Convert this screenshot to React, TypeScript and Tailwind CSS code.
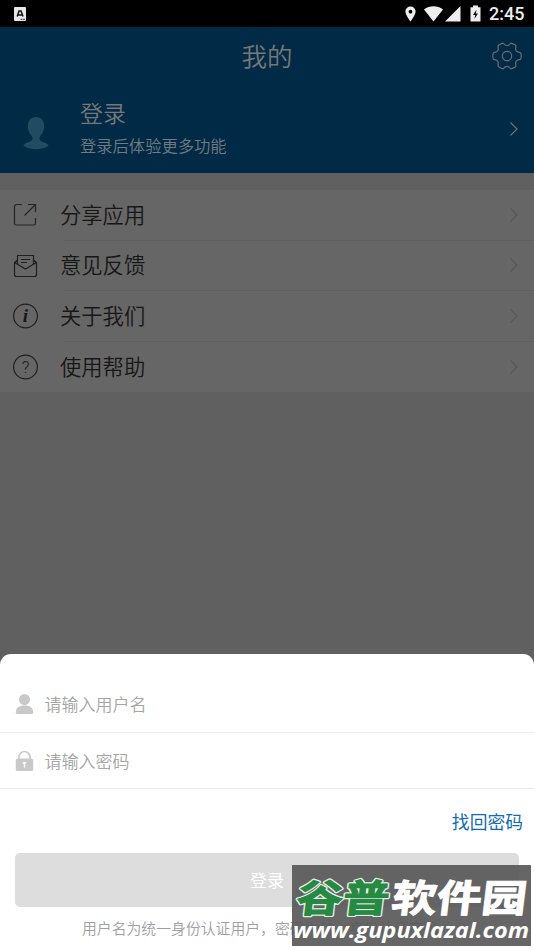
import type { ReactNode } from "react";

function Chevron({ color }: { color: string }) {
  return (
    <svg width="10" height="16" viewBox="0 0 10 16" fill="none" stroke={color} strokeWidth="1.2" className="shrink-0">
      <path d="M1.5 1.5 8 8l-6.500 6.500" />
    </svg>
  );
}

function StatusBar() {
  return (
    <div className="flex h-[27px] items-center bg-black pl-[14px] pr-[9px]">
      <svg width="12" height="14" viewBox="0 0 12 14">
        <rect width="12" height="14" rx="1" fill="#e8e8e8" />
        <path d="M3.200 9.500 5 4h2l2 5.500M4 8h4" fill="none" stroke="#111" strokeWidth="1.500" />
        <path d="M6.500 12.300h4.500" stroke="#333" strokeWidth="1" strokeDasharray="2 .5" />
      </svg>
      <div className="ml-auto flex items-center">
        <svg width="11" height="16" viewBox="0 0 11 16" fill="#eee">
          <path fillRule="evenodd" d="M5.500.5A5 5 0 0 0 .4 5.600C.4 9.300 5.500 15.500 5.500 15.500s5.100-6.200 5.100-9.900A5 5 0 0 0 5.500.5Zm0 3.300a1.900 1.900 0 1 1 0 3.800 1.900 1.900 0 0 1 0-3.800Z" />
        </svg>
        <svg width="19" height="16" viewBox="0 0 19 16" fill="#eee" className="ml-[8px]">
          <path d="M0 3.500C5.500-.7 13.500-.7 19 3.500L9.500 15.500Z" />
        </svg>
        <svg width="16" height="16" viewBox="0 0 16 16" fill="#eee" className="ml-[2px]">
          <path d="M0 15.500 15.500 0v15.500Z" />
        </svg>
        <svg width="11" height="17" viewBox="0 0 11 17" className="ml-[9px]">
          <path d="M3 .5h5v1.700h2.500v14.300H.5V2.200H3Z" fill="#eee" />
          <path d="M6.500 4.500 3 10h2.200l-.8 4L8 8.500H5.800Z" fill="#111" />
        </svg>
        <span className="ml-[8px] w-[36px] whitespace-nowrap font-['Roboto',sans-serif] text-[18px] font-medium leading-[27px] text-[#ececec]">2:45</span>
      </div>
    </div>
  );
}

function Row({ icon, label, divider = true }: { icon: ReactNode; label: string; divider?: boolean }) {
  return (
    <div className="flex h-[50.500px] pl-[12px]">
      <div className="flex w-[49px] shrink-0 items-center">{icon}</div>
      <div className={"ml-[3px] flex flex-1 items-center justify-between pr-[15px] " + (divider ? "border-b border-[#5f5f5f]" : "")}>
        <span className="-ml-[4px] -mt-[2px] text-[21.300px] text-[#171717]">{label}</span>
        <Chevron color="#595959" />
      </div>
    </div>
  );
}

const shareIcon = (
  <svg width="26" height="26" viewBox="0 0 26 26" fill="none" stroke="#252525" strokeWidth="1.200">
    <path d="M10 2.500H4.500a2 2 0 0 0-2 2v17a1.500 1.500 0 0 0 1.500 1.500h18a1.500 1.500 0 0 0 1.500-1.500V16M16 2.500h7.500V10M23.500 2.500 12.500 13.500" />
  </svg>
);
const mailIcon = (
  <svg width="26" height="26" viewBox="0 0 26 26" fill="none" stroke="#202020" strokeWidth="1.200">
    <path d="M5.500 7 2.500 9.500v12A2 2 0 0 0 4.500 23.500h18a2 2 0 0 0 2-2v-12L21.500 7M2.500 9.500l11 6.500 11-6.500M5.500 11V2.500h16V11M9 6.500h9M9 9.500h6" />
  </svg>
);
const infoIcon = (
  <svg width="26" height="26" viewBox="0 0 26 26">
    <circle cx="13.500" cy="13" r="11.900" fill="none" stroke="#202020" strokeWidth="1.200" />
    <text x="13.500" y="19" textAnchor="middle" fill="#181818" fontFamily="Liberation Serif, serif" fontSize="19" fontStyle="italic" fontWeight="700">i</text>
  </svg>
);
const helpIcon = (
  <svg width="26" height="26" viewBox="0 0 26 26">
    <circle cx="13.500" cy="13" r="11.900" fill="none" stroke="#202020" strokeWidth="1.200" />
    <text x="13.500" y="19" textAnchor="middle" fill="#202020" fontFamily="Roboto, sans-serif" fontSize="17">?</text>
  </svg>
);

export default function App() {
  return (
    <div className="relative flex h-[950px] w-[534px] flex-col overflow-hidden bg-[#606060] font-['Noto_Sans_CJK_SC',sans-serif] font-[350]">
      <StatusBar />
      <header className="h-[146px] bg-[#002a45]">
        <div className="grid h-[58px] grid-cols-[1fr_auto_1fr] items-center">
          <h1 className="col-start-2 -mt-[2px] text-[25.500px] font-[350] leading-[58px] text-[#777]">我的</h1>
          <svg width="30" height="30" viewBox="0 0 30 30" fill="none" stroke="#666d72" strokeWidth="1.200" strokeLinejoin="round" className="mr-[12px] justify-self-end">
            <path d="M11 2.100C11.800 1.900 12 4.600 15 4.600S18.200 1.900 19 2.100C21.400 2.800 23.600 4 24 4.900C24.400 6 22.800 7.300 24.200 9.600C25.600 11.900 28.300 10.900 28.700 12C29.200 13.500 29.200 16.500 28.700 18C28.300 19.100 25.600 18.100 24.200 20.400C22.800 22.700 24.400 24 24 25.100C23.600 26 21.400 27.200 19 27.900C18.200 28.100 18 25.400 15 25.400S11.800 28.100 11 27.900C8.600 27.200 6.400 26 6 25.100C5.600 24 7.200 22.700 5.800 20.400C4.400 18.100 1.700 19.100 1.300 18C.8 16.500.8 13.500 1.300 12C1.700 10.900 4.400 11.900 5.800 9.600C7.200 7.300 5.600 6 6 4.900C6.400 4 8.600 2.800 11 2.100Z" />
            <circle cx="15" cy="15" r="4.700" />
          </svg>
        </div>
        <div className="flex h-[88px] items-center pl-[23px] pr-[15px]">
          <svg width="26" height="34" viewBox="0 0 26 34" fill="#214b61" className="mt-[8px]">
            <path d="M13 1C7.800 1 4.800 4.500 4.800 10c0 4.600 1.900 7.600 3.800 10 1.300 1.800 1.300 3.800-.6 5C5.500 26.500 2 26.500.3 29.800 3 32 8 33.300 13 33.300s10-1.300 12.700-3.500C24 26.500 20.500 26.500 18 25c-1.900-1.200-1.900-3.200-.6-5 1.900-2.400 3.800-5.400 3.800-10C21.200 4.500 18.200 1 13 1Z" />
          </svg>
          <div className="-mt-[3px] ml-[31px] flex flex-col">
            <span className="text-[23px] leading-[34px] text-[#777]">登录</span>
            <span className="text-[16.300px] leading-[32px] text-[#737b80]">登录后体验更多功能</span>
          </div>
          <div className="ml-auto -mt-[1px]"><Chevron color="#5f7480" /></div>
        </div>
      </header>
      <main className="mt-[17px] bg-[#666]">
        <Row icon={shareIcon} label="分享应用" />
        <Row icon={mailIcon} label="意见反馈" />
        <Row icon={infoIcon} label="关于我们" />
        <Row icon={helpIcon} label="使用帮助" divider={false} />
      </main>
      <section className="mt-auto h-[296px] rounded-t-[11px] bg-white">
        <div className="mt-[22px] flex h-[57px] items-center border-b border-[#eee] pl-[15px]">
          <svg width="19" height="22" viewBox="0 0 19 22" fill="#c9c9c9">
            <circle cx="9.500" cy="6.500" r="5.500" />
            <path d="M.8 19.500c0-4.500 3.200-7 8.700-7s8.700 2.500 8.700 7q0 1.500-1.500 1.500H2.300Q.8 21 .8 19.500Z" />
          </svg>
          <span className="ml-[10.500px] text-[17px] text-[#a5a5a5]">请输入用户名</span>
        </div>
        <div className="flex h-[56px] items-center border-b border-[#e9e9e9] pl-[15px]">
          <svg width="19" height="22" viewBox="0 0 19 22">
            <path d="M4 10V7a5.500 5.500 0 0 1 11 0v3" fill="none" stroke="#c9c9c9" strokeWidth="1.700" />
            <rect x=".8" y="8.500" width="17.400" height="12.500" rx="1.500" fill="#c9c9c9" />
            <path d="M9.500 12v5.500M7.800 13h3.400" stroke="#fff" strokeWidth="1.500" />
          </svg>
          <span className="ml-[10.500px] text-[17px] text-[#a5a5a5]">请输入密码</span>
        </div>
        <div className="flex h-[64px] items-center justify-end pr-[11px]">
          <span className="text-[17.800px] font-normal text-[#126caf]">找回密码</span>
        </div>
        <div className="mx-[15px] flex h-[54px] items-center justify-center rounded-[5px] bg-[#ddd]">
          <span className="text-[17px] font-normal text-white">登录</span>
        </div>
        <p className="whitespace-nowrap pl-[82px] pt-[9px] text-[14.850px] leading-[24px] text-[#a0a0a0]">用户名为统一身份认证用户，密码为统一身份认证密码</p>
      </section>
      <div className="absolute left-[292px] top-[865px] h-[81px] w-[239px] bg-[#555]/90">
        <svg width="239" height="81" viewBox="0 0 239 81" className="overflow-visible">
          <g transform="skewX(-7)" fontFamily="Noto Sans CJK SC, sans-serif" fontWeight="700" fontSize="38">
            <g transform="translate(9 47) scale(1.220 1)">
              <text fill="#278a42" stroke="#e4eee6" strokeWidth="3.500" strokeLinejoin="round" paintOrder="stroke">谷普</text>
              <text fill="#278a42" stroke="#278a42" strokeWidth="1">谷普</text>
            </g>
            <text transform="translate(104 47) scale(1.185 1)" fill="#fff" stroke="#fff" strokeWidth="1">软件园</text>
          </g>
          <text x="1" y="73" textLength="236" lengthAdjust="spacingAndGlyphs" fill="#fff" fontFamily="Open Sans, Noto Sans, sans-serif" fontWeight="700" fontStyle="italic" fontSize="21.500">www.gupuxlazal.com</text>
        </svg>
      </div>
    </div>
  );
}
